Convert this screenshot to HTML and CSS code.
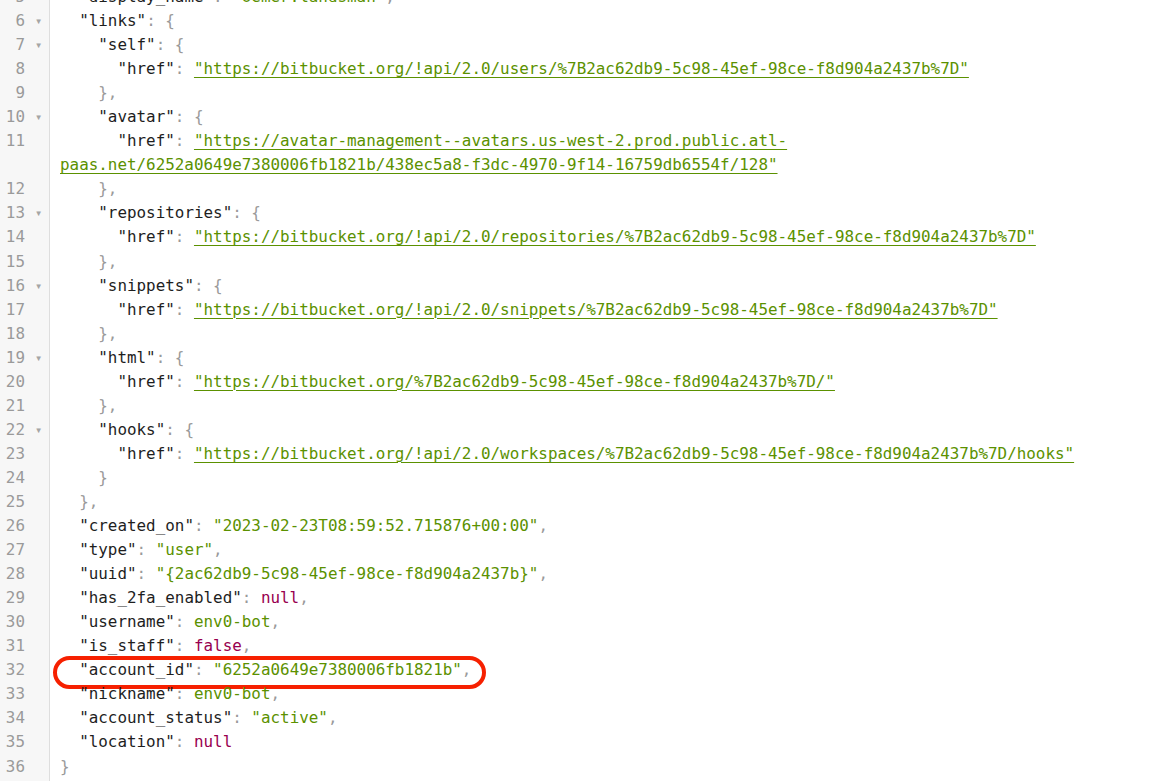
FILE: index.html
```html
<!doctype html>
<html lang="en">
<head>
    <meta charset="UTF-8">
    <title>account.json</title>
    <link rel="stylesheet" href="styles.css">
</head>
<body>
<div class="viewer">
    <div class="line"><span class="gutter"><span class="num">5</span><span class="fold"></span></span><span class="code">  <span class="k">"display_name"</span><span class="p">: </span><span class="s">"oemer.landsman"</span><span class="p">,</span></span></div>
    <div class="line"><span class="gutter"><span class="num">6</span><span class="fold">▾</span></span><span class="code">  <span class="k">"links"</span><span class="p">: {</span></span></div>
    <div class="line"><span class="gutter"><span class="num">7</span><span class="fold">▾</span></span><span class="code">    <span class="k">"self"</span><span class="p">: {</span></span></div>
    <div class="line"><span class="gutter"><span class="num">8</span><span class="fold"></span></span><span class="code">      <span class="k">"href"</span><span class="p">: </span><a class="s link" href="#">"https://bitbucket.org/!api/2.0/users/%7B2ac62db9-5c98-45ef-98ce-f8d904a2437b%7D"</a></span></div>
    <div class="line"><span class="gutter"><span class="num">9</span><span class="fold"></span></span><span class="code">    <span class="p">},</span></span></div>
    <div class="line"><span class="gutter"><span class="num">10</span><span class="fold">▾</span></span><span class="code">    <span class="k">"avatar"</span><span class="p">: {</span></span></div>
    <div class="line"><span class="gutter"><span class="num">11</span><span class="fold"></span></span><span class="code">      <span class="k">"href"</span><span class="p">: </span><a class="s link" href="#">"https://avatar-management--avatars.us-west-2.prod.public.atl-paas.net/6252a0649e7380006fb1821b/438ec5a8-f3dc-4970-9f14-16759db6554f/128"</a></span></div>
    <div class="line"><span class="gutter"><span class="num">12</span><span class="fold"></span></span><span class="code">    <span class="p">},</span></span></div>
    <div class="line"><span class="gutter"><span class="num">13</span><span class="fold">▾</span></span><span class="code">    <span class="k">"repositories"</span><span class="p">: {</span></span></div>
    <div class="line"><span class="gutter"><span class="num">14</span><span class="fold"></span></span><span class="code">      <span class="k">"href"</span><span class="p">: </span><a class="s link" href="#">"https://bitbucket.org/!api/2.0/repositories/%7B2ac62db9-5c98-45ef-98ce-f8d904a2437b%7D"</a></span></div>
    <div class="line"><span class="gutter"><span class="num">15</span><span class="fold"></span></span><span class="code">    <span class="p">},</span></span></div>
    <div class="line"><span class="gutter"><span class="num">16</span><span class="fold">▾</span></span><span class="code">    <span class="k">"snippets"</span><span class="p">: {</span></span></div>
    <div class="line"><span class="gutter"><span class="num">17</span><span class="fold"></span></span><span class="code">      <span class="k">"href"</span><span class="p">: </span><a class="s link" href="#">"https://bitbucket.org/!api/2.0/snippets/%7B2ac62db9-5c98-45ef-98ce-f8d904a2437b%7D"</a></span></div>
    <div class="line"><span class="gutter"><span class="num">18</span><span class="fold"></span></span><span class="code">    <span class="p">},</span></span></div>
    <div class="line"><span class="gutter"><span class="num">19</span><span class="fold">▾</span></span><span class="code">    <span class="k">"html"</span><span class="p">: {</span></span></div>
    <div class="line"><span class="gutter"><span class="num">20</span><span class="fold"></span></span><span class="code">      <span class="k">"href"</span><span class="p">: </span><a class="s link" href="#">"https://bitbucket.org/%7B2ac62db9-5c98-45ef-98ce-f8d904a2437b%7D/"</a></span></div>
    <div class="line"><span class="gutter"><span class="num">21</span><span class="fold"></span></span><span class="code">    <span class="p">},</span></span></div>
    <div class="line"><span class="gutter"><span class="num">22</span><span class="fold">▾</span></span><span class="code">    <span class="k">"hooks"</span><span class="p">: {</span></span></div>
    <div class="line"><span class="gutter"><span class="num">23</span><span class="fold"></span></span><span class="code">      <span class="k">"href"</span><span class="p">: </span><a class="s link" href="#">"https://bitbucket.org/!api/2.0/workspaces/%7B2ac62db9-5c98-45ef-98ce-f8d904a2437b%7D/hooks"</a></span></div>
    <div class="line"><span class="gutter"><span class="num">24</span><span class="fold"></span></span><span class="code">    <span class="p">}</span></span></div>
    <div class="line"><span class="gutter"><span class="num">25</span><span class="fold"></span></span><span class="code">  <span class="p">},</span></span></div>
    <div class="line"><span class="gutter"><span class="num">26</span><span class="fold"></span></span><span class="code">  <span class="k">"created_on"</span><span class="p">: </span><span class="s">"2023-02-23T08:59:52.715876+00:00"</span><span class="p">,</span></span></div>
    <div class="line"><span class="gutter"><span class="num">27</span><span class="fold"></span></span><span class="code">  <span class="k">"type"</span><span class="p">: </span><span class="s">"user"</span><span class="p">,</span></span></div>
    <div class="line"><span class="gutter"><span class="num">28</span><span class="fold"></span></span><span class="code">  <span class="k">"uuid"</span><span class="p">: </span><span class="s">"{2ac62db9-5c98-45ef-98ce-f8d904a2437b}"</span><span class="p">,</span></span></div>
    <div class="line"><span class="gutter"><span class="num">29</span><span class="fold"></span></span><span class="code">  <span class="k">"has_2fa_enabled"</span><span class="p">: </span><span class="a">null</span><span class="p">,</span></span></div>
    <div class="line"><span class="gutter"><span class="num">30</span><span class="fold"></span></span><span class="code">  <span class="k">"username"</span><span class="p">: </span><span class="s">env0-bot</span><span class="p">,</span></span></div>
    <div class="line"><span class="gutter"><span class="num">31</span><span class="fold"></span></span><span class="code">  <span class="k">"is_staff"</span><span class="p">: </span><span class="a">false</span><span class="p">,</span></span></div>
    <div class="line"><span class="gutter"><span class="num">32</span><span class="fold"></span></span><span class="code">  <span class="k">"account_id"</span><span class="p">: </span><span class="s">"6252a0649e7380006fb1821b"</span><span class="p">,</span><span class="mark"></span></span></div>
    <div class="line"><span class="gutter"><span class="num">33</span><span class="fold"></span></span><span class="code">  <span class="k">"nickname"</span><span class="p">: </span><span class="s">env0-bot</span><span class="p">,</span></span></div>
    <div class="line"><span class="gutter"><span class="num">34</span><span class="fold"></span></span><span class="code">  <span class="k">"account_status"</span><span class="p">: </span><span class="s">"active"</span><span class="p">,</span></span></div>
    <div class="line"><span class="gutter"><span class="num">35</span><span class="fold"></span></span><span class="code">  <span class="k">"location"</span><span class="p">: </span><span class="a">null</span></span></div>
    <div class="line"><span class="gutter"><span class="num">36</span><span class="fold"></span></span><span class="code"><span class="p">}</span></span></div>
</div>
</body>
</html>
```

FILE: styles.css
```css
html,body{margin:0;padding:0;background:#fff;overflow:hidden}
body{font-family:'DejaVu Sans Mono','Liberation Mono',monospace;font-size:15.9px;line-height:24.05px;color:#1e1e1e}
.viewer{margin-top:-15px;min-height:calc(100vh + 16px);background:linear-gradient(to right,#f7f7f7 49px,#dedede 49px,#dedede 50px,#fff 50px)}
.line{display:grid;grid-template-columns:50px 1fr}
.gutter{display:flex;align-items:flex-start;color:#9a9a9a}
.num{width:25px;text-align:right}
.fold{width:25px;text-align:center;font-size:12px;color:#a5a5a5;padding-left:2px;box-sizing:border-box}
.code{position:relative;white-space:pre-wrap;padding-left:10px;padding-right:4px}
.k{color:#1e1e1e}
.p{color:#9a9a9a}
.s{color:#5b9100}
.a{color:#98004f}
.link{text-decoration:underline;text-underline-offset:3px;text-decoration-thickness:1px}
.mark{position:absolute;left:3px;top:-2px;width:433px;height:33px;box-sizing:border-box;border:4px solid #f62000;border-radius:17px}
```
